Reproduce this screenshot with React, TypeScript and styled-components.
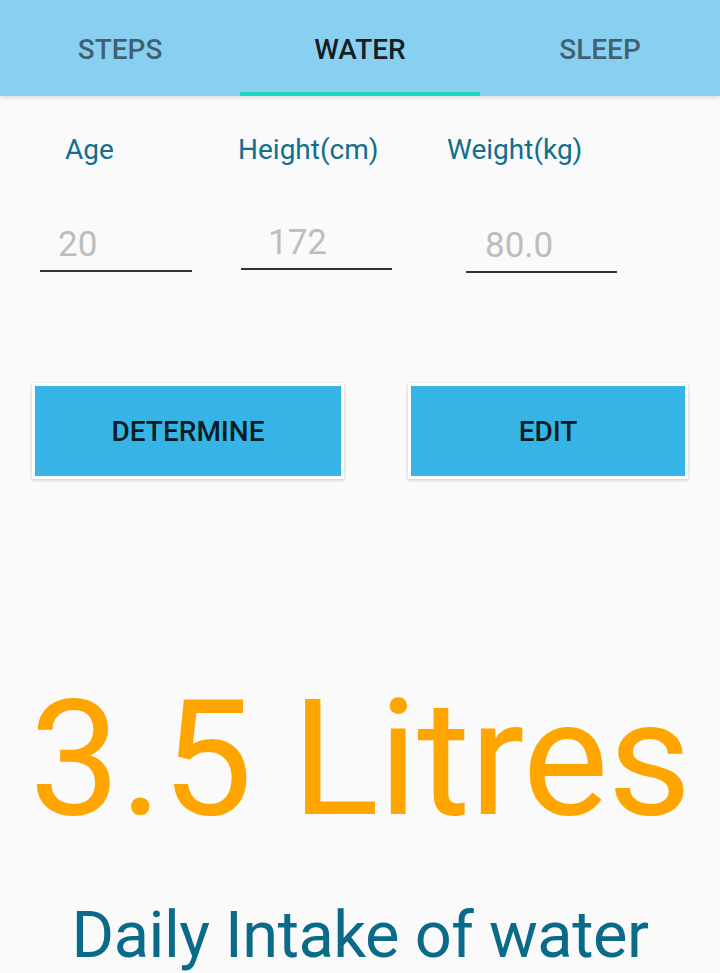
import React from 'react';
import styled, { createGlobalStyle } from 'styled-components';

const GlobalStyle = createGlobalStyle`
  html, body {
    margin: 0;
    padding: 0;
    background: #fafafa;
  }
  body {
    font-family: Roboto, "Noto Sans", sans-serif;
  }
`

const Page = styled.div`
  display: flex;
  flex-direction: column;
  width: 720px;
  min-height: 973px;
  background: #fafafa;
  overflow: hidden;
`

const TabBar = styled.div`
  display: flex;
  height: 96px;
  background: #89cff0;
  box-shadow: 0 2px 4px rgba(0, 0, 0, 0.12);
  position: relative;
  z-index: 1;
`

const Tab = styled.div<{ $active?: boolean }>`
  flex: 1;
  display: flex;
  align-items: center;
  justify-content: center;
  padding-top: 6px;
  font-size: 28px;
  font-weight: 500;
  color: ${p => (p.$active ? 'rgba(0, 0, 0, 0.87)' : 'rgba(0, 0, 0, 0.54)')};
  border-bottom: 4px solid ${p => (p.$active ? '#18d6c3' : 'transparent')};
  box-sizing: border-box;
`

const LabelRow = styled.div`
  display: flex;
  margin-top: 38px;
  padding-left: 65px;
`

const Label = styled.div<{ $width: number }>`
  width: ${p => p.$width}px;
  font-size: 28px;
  line-height: 32px;
  color: #116f8d;
`

const FieldRow = styled.div`
  display: flex;
  align-items: flex-start;
  margin-top: 59px;
  padding-left: 40px;
`

const Field = styled.div<{ $width: number; $gap: number; $shift: number; $indent: number }>`
  width: ${p => p.$width}px;
  margin-right: ${p => p.$gap}px;
  margin-top: ${p => p.$shift}px;
  padding: 0 0 5px ${p => p.$indent}px;
  box-sizing: border-box;
  border-bottom: 2px solid #333;
  font-size: 35px;
  line-height: 40px;
  color: #bdbdbd;
`

const ButtonRow = styled.div`
  display: flex;
  margin-top: 110px;
  padding-left: 32px;
  gap: 64px;
`

const Button = styled.button<{ $width: number }>`
  width: ${p => p.$width}px;
  height: 96px;
  border: 3px solid #fff;
  background: #35b4e5;
  box-shadow: 0 1px 3px rgba(0, 0, 0, 0.22);
  font-family: Roboto, sans-serif;
  font-size: 28px;
  font-weight: 500;
  color: rgba(0, 0, 0, 0.87);
  padding: 0;
  cursor: pointer;
`

const Amount = styled.div`
  margin-top: 185px;
  text-align: center;
  font-size: 162px;
  line-height: 190px;
  letter-spacing: -0.6px;
  color: #ffa500;
  white-space: nowrap;
`

const Caption = styled.div`
  margin-top: 43px;
  text-align: center;
  font-size: 65px;
  line-height: 77px;
  letter-spacing: -0.5px;
  color: #0a6a8a;
  white-space: nowrap;
`

const App: React.FC = () => {
  return (
    <Page>
      <GlobalStyle />
      <TabBar>
        <Tab>STEPS</Tab>
        <Tab $active>WATER</Tab>
        <Tab>SLEEP</Tab>
      </TabBar>
      <LabelRow>
        <Label $width={173}>Age</Label>
        <Label $width={209}>Height(cm)</Label>
        <Label $width={160}>Weight(kg)</Label>
      </LabelRow>
      <FieldRow>
        <Field $width={152} $gap={49} $shift={0} $indent={18}>20</Field>
        <Field $width={151} $gap={74} $shift={-2} $indent={27}>172</Field>
        <Field $width={151} $gap={0} $shift={1} $indent={19}>80.0</Field>
      </FieldRow>
      <ButtonRow>
        <Button $width={312}>DETERMINE</Button>
        <Button $width={280}>EDIT</Button>
      </ButtonRow>
      <Amount>3.5 Litres</Amount>
      <Caption>Daily Intake of water</Caption>
    </Page>
  )
}

export default App;
